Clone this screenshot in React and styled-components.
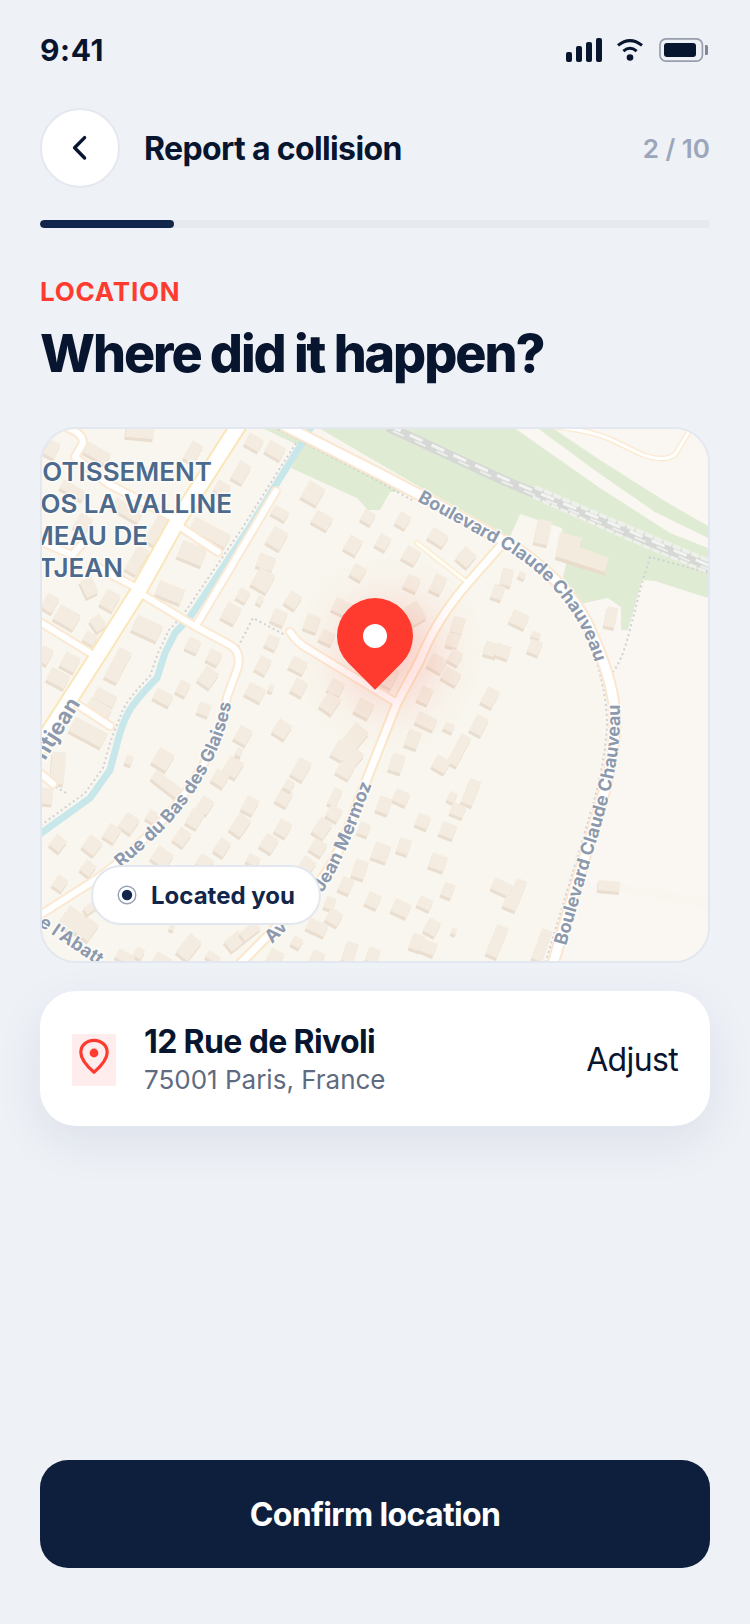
import styled, { createGlobalStyle } from "styled-components";

// x, y of the centre, width, height, rotation
const buildings = [
  [140, 430, 28, 16, 5], [50, 448, 16, 16, 25], [97, 453, 26, 12, 30], [193, 452, 12, 20, 30],
  [254, 442, 16, 13, 30], [275, 450, 18, 13, 30], [241, 472, 13, 20, 30], [222, 488, 14, 12, 30],
  [313, 493, 18, 19, 30], [322, 520, 18, 14, 30], [368, 517, 12, 12, 30], [280, 513, 16, 10, 30],
  [277, 538, 16, 19, 30], [353, 545, 14, 16, 30], [266, 562, 17, 14, 20], [263, 580, 18, 20, 30],
  [358, 572, 13, 13, 30], [210, 532, 40, 14, 28], [192, 553, 26, 18, 22], [83, 523, 14, 16, 30],
  [157, 530, 13, 30, 30], [137, 560, 13, 28, 30], [127, 510, 30, 12, 30], [73, 490, 26, 10, 30],
  [170, 592, 27, 15, 22], [89, 587, 13, 18, -25], [110, 600, 15, 18, 30], [50, 603, 13, 16, 30],
  [67, 617, 23, 17, 30], [98, 623, 12, 14, -35], [90, 638, 12, 11, 30], [147, 628, 28, 17, 25],
  [243, 595, 11, 12, 30], [260, 600, 6, 8, 30], [293, 600, 13, 15, 35], [231, 613, 15, 18, 28],
  [279, 617, 14, 14, 25], [312, 623, 14, 16, 20], [342, 607, 18, 14, 25], [327, 637, 14, 12, 25],
  [272, 642, 12, 13, 25], [193, 645, 13, 13, 25], [214, 657, 13, 13, 28], [118, 665, 14, 34, 28],
  [45, 655, 12, 16, 28], [70, 662, 16, 16, 28], [58, 678, 20, 14, 28], [263, 665, 12, 16, 28],
  [298, 665, 16, 13, 28], [208, 677, 15, 18, 35], [105, 697, 22, 12, 28], [183, 688, 11, 14, 28],
  [255, 692, 18, 14, 28], [271, 688, 5, 7, 20], [299, 687, 13, 15, 28], [336, 687, 14, 14, 28],
  [163, 697, 18, 12, 28], [403, 520, 12, 14, 30], [438, 537, 18, 13, 32], [383, 542, 12, 14, 30],
  [411, 555, 15, 15, 30], [466, 557, 15, 16, 40], [412, 583, 14, 14, 25], [438, 584, 12, 18, 25],
  [507, 577, 11, 17, 12], [498, 592, 11, 14, 20], [522, 575, 7, 6, 25], [543, 532, 14, 24, 12],
  [611, 617, 11, 20, 12], [415, 613, 16, 20, -30], [519, 619, 17, 14, 25], [458, 625, 12, 16, 15],
  [453, 640, 12, 14, 15], [536, 635, 9, 6, 20], [535, 647, 12, 14, 22], [491, 649, 13, 14, 15],
  [503, 651, 14, 13, 20], [455, 657, 12, 13, 30], [437, 663, 16, 15, 30], [451, 676, 17, 13, 30],
  [425, 695, 12, 16, 25], [490, 697, 13, 18, 28], [390, 677, 12, 20, 28], [204, 709, 12, 12, 20],
  [330, 703, 15, 18, 35], [364, 708, 16, 16, 28], [282, 729, 15, 16, 32], [243, 735, 14, 16, 30],
  [355, 737, 17, 24, 40], [163, 759, 17, 18, 32], [168, 785, 36, 11, 38], [342, 751, 17, 18, 30],
  [353, 757, 15, 18, 40], [345, 770, 15, 14, 30], [233, 767, 16, 18, 32], [220, 778, 14, 14, 32],
  [239, 752, 6, 8, 20], [301, 769, 14, 20, 30], [129, 760, 7, 9, 20], [98, 710, 24, 16, 30],
  [88, 732, 36, 16, 28], [58, 768, 14, 32, 5], [47, 796, 12, 16, 5], [284, 797, 13, 16, 30],
  [289, 785, 9, 10, 30], [250, 805, 13, 16, 28], [205, 805, 13, 15, 32], [195, 818, 13, 18, 30],
  [335, 797, 9, 18, 25], [334, 813, 13, 13, 30], [322, 828, 14, 18, 35], [240, 825, 14, 20, 35],
  [283, 828, 13, 15, 30], [364, 829, 11, 12, 20], [152, 816, 10, 11, 30], [129, 823, 15, 17, 35],
  [112, 833, 13, 16, 32], [58, 843, 13, 14, 38], [92, 845, 15, 16, 38], [182, 837, 13, 16, 35],
  [222, 847, 12, 16, 32], [269, 843, 14, 16, 32], [318, 847, 14, 14, 32], [162, 857, 18, 16, 35],
  [205, 862, 15, 12, 32], [253, 860, 12, 10, 30], [307, 865, 14, 14, 35], [88, 868, 12, 13, 38],
  [60, 883, 12, 13, 35], [360, 869, 13, 18, 18], [346, 885, 12, 15, 25], [373, 900, 13, 14, 25],
  [330, 903, 10, 12, 20], [334, 917, 14, 14, 30], [72, 920, 20, 22, 35], [86, 928, 18, 20, 35],
  [90, 908, 12, 8, -35], [235, 941, 18, 13, -38], [250, 931, 20, 10, -38], [189, 947, 15, 24, 38],
  [317, 927, 20, 12, 25], [297, 942, 10, 10, 30], [275, 957, 14, 14, 28], [317, 958, 13, 14, 25],
  [350, 952, 12, 20, 18], [139, 953, 9, 10, 30], [125, 957, 18, 10, 30], [163, 960, 18, 10, 30],
  [213, 957, 14, 8, 35], [172, 927, 5, 6, 20], [426, 721, 20, 12, 25], [449, 727, 10, 8, 25],
  [479, 725, 13, 18, 28], [413, 739, 13, 17, 20], [459, 750, 11, 32, 28], [441, 764, 15, 14, 30],
  [397, 763, 13, 18, 18], [471, 792, 12, 26, 22], [452, 797, 8, 10, 25], [458, 810, 14, 12, 22],
  [401, 797, 15, 13, 25], [384, 805, 13, 16, 20], [423, 821, 13, 13, 22], [448, 830, 15, 14, 22],
  [381, 852, 16, 17, 20], [404, 846, 12, 15, 20], [438, 862, 16, 15, 20], [448, 890, 11, 14, 22],
  [502, 887, 20, 12, 25], [518, 890, 11, 22, 22], [511, 903, 14, 12, 22], [401, 908, 17, 14, 25],
  [425, 903, 14, 11, 25], [432, 927, 13, 15, 28], [454, 931, 5, 6, 20], [417, 942, 12, 16, 20],
  [428, 947, 16, 13, 22], [497, 941, 12, 32, 22], [542, 945, 11, 32, 20], [609, 886, 22, 10, 5],
  [373, 955, 12, 14, 20],
];

const boulevard =
  "M285 426 L380 474 L420 495 L500 539 C545 563 575 598 588 625 C602 655 615 690 615 720 C615 765 598 815 583 863 L553 964";
const mermoz =
  "M503 543 L468 583 C440 615 428 640 420 660 L397 703 L365 784 C350 822 340 855 323 877 C308 897 275 928 240 964";
const glaises =
  "M138 592 L193 625 L230 645 Q241 651 238 667 L227 697 C222 735 200 780 163 820 C140 845 110 870 95 880 L40 915";

const smallRoads = [
  "M276 491 L197 624",
  "M182 528 L218 552",
  "M66 427 Q84 434 83 443 L75 457",
  "M75 457 L107 483 L175 519",
  "M40 541 L72 555 L83 543",
  "M137 588 L97 567",
  "M40 622 L95 656",
  "M78 705 L110 726",
  "M40 773 L53 784",
  "M290 632 Q298 644 310 650 L397 703",
];

const canal =
  "M311 427 L302 443 L277 483 L250 527 L190 617 L175 633 L165 653 L157 678 Q135 700 128 713 Q122 725 118 740 L110 770 L90 798 L40 834";

const footpaths = [
  "M296 443 L270 484 L243 527 L183 615 L169 630 L158 653 L150 676 Q128 698 122 712 L111 740 L103 768 L85 793 L40 826",
  "M238 647 L253 618 L285 635",
  "M708 573 L650 557 L642 583 L628 637 Q622 660 613 672",
  "M278 429 L376 480 L412 500",
  "M596 660 Q607 695 607 725 Q605 765 590 815 L546 961",
  "M66 793 L56 787",
];

function MapDrawing() {
  return (
    <MapSvg viewBox="42 429 666 532" preserveAspectRatio="xMidYMid slice" aria-hidden="true">
      <defs>
        <path id="label-boulevard-north" d="M417 501 L499 546 C541 569 568 602 581 628 C590 646 596 662 602 690" />
        <path id="label-boulevard-east" d="M566 946 L589 865 C604 817 620 765 620 720 L619 670" />
        <path id="label-avenue" d="M272 944 L300 916" />
        <path id="label-mermoz" d="M322 893 C342 866 356 824 371 786 L386 745" />
        <path id="label-glaises" d="M121 868 C139 853 155 838 168 825 C205 785 226 738 232 699 L234 670" />
        <path id="label-petitjean" d="M45 761 L92 685" />
        <path id="label-abattoir" d="M38 925 L112 975" />
      </defs>

      <rect x="42" y="429" width="666" height="532" fill="#f8f6ee" />
      <path
        d="M500 429 H708 V961 H553 L583 863 C598 815 615 765 615 720 C615 690 602 655 588 625 L565 577 Z"
        fill="#faf7f2"
      />
      <path d="M611 882 L708 898 V909 L611 890 Z" fill="#f8f6ee" />

      <g fill="#dfebd3">
        <path d="M260 427 L297 427 L412 492 L390 492 L380 510 L368 510 L357 498 L291 468 L302 447 Z" />
        <path d="M317 427 H513 L600 488 L670 533 L708 548 V598 L655 581 L642 580 L628 630 H621 V607 L608 598 L580 604 L563 577 L567 560 L562 528 L520 514 L510 537 L420 487 Z" />
        <path d="M536 427 H551 L600 460 L663 500 L708 526 V538 L655 512 L600 474 Z" />
      </g>

      <path d={canal} fill="none" stroke="#c8e7ea" strokeWidth="7" />

      <g fill="none" stroke="#cfd1d6" strokeWidth="2" strokeDasharray="2 3">
        {footpaths.map((d) => (
          <path key={d} d={d} />
        ))}
      </g>

      <path d="M388 427 L503 480 L653 543 L710 568" fill="none" stroke="#d6d8d5" strokeWidth="10" />
      <path d="M388 425 L503 478 L653 541 L710 566" fill="none" stroke="#f3f4f2" strokeWidth="3" strokeDasharray="14 10" />
      <path d="M393 431 L503 482 L653 545 L710 570" fill="none" stroke="#eeefed" strokeWidth="2" strokeDasharray="12 12" />
      <path d="M535 487 L655 538 L710 561" fill="none" stroke="#eff0ec" strokeWidth="4" strokeDasharray="8 2" />
      <path d="M533 497 L651 549 L710 573" fill="none" stroke="#eff0ec" strokeWidth="3" strokeDasharray="8 2" />

      {buildings.map(([x, y, w, h, r]) => (
        <g key={`${x}-${y}`}>
          <rect
            x={x - w / 2}
            y={y - h / 2}
            width={w}
            height={h}
            fill="#e9decf"
            transform={`translate(-1 3) rotate(${r} ${x} ${y})`}
          />
          <rect x={x - w / 2} y={y - h / 2} width={w} height={h} fill="#f4ece0" transform={`rotate(${r} ${x} ${y})`} />
        </g>
      ))}
      <path d="M560 535 L582 541 L580 550 L608 561 L605 576 L555 560 Z" fill="#e9dccd" />
      <path d="M560 532 L582 538 L580 547 L609 558 L605 572 L555 556 Z" fill="#f4ebdf" />

      <g fill="none" strokeLinecap="round" strokeLinejoin="round">
        <g stroke="#fbe9d3" strokeWidth="10">
          {smallRoads.map((d) => (
            <path key={d} d={d} />
          ))}
          <path d={glaises} />
        </g>
        <path d="M417 543 L468 583" stroke="#fbeccf" strokeWidth="6" />
        <path d="M555 427 Q590 430 612 440 L643 455 Q668 463 676 453 L690 430" stroke="#fcebd4" strokeWidth="6" />
        <path d={mermoz} stroke="#fbe7c8" strokeWidth="11" />
        <path d={boulevard} stroke="#fbe7cf" strokeWidth="13" />
        <path d="M242 420 L178 520 L138 592 L97 657 L36 752" stroke="#fbe6b8" strokeWidth="18" />

        <g stroke="#ffffff" strokeWidth="6">
          {smallRoads.map((d) => (
            <path key={d} d={d} />
          ))}
          <path d={glaises} />
        </g>
        <path d="M417 543 L468 583" stroke="#fffdf6" strokeWidth="3" />
        <path d="M555 427 Q590 430 612 440 L643 455 Q668 463 676 453 L690 430" stroke="#ffffff" strokeWidth="3" />
        <path d={mermoz} stroke="#ffffff" strokeWidth="7" />
        <path d={boulevard} stroke="#ffffff" strokeWidth="9" />
        <path d="M242 420 L178 520 L138 592 L97 657 L36 752" stroke="#ffffff" strokeWidth="14" />
      </g>

      <DistrictLabel textAnchor="end">
        <tspan x="212" y="481">OTISSEMENT</tspan>
        <tspan x="232" y="513">OS LA VALLINE</tspan>
        <tspan x="148" y="545">MEAU DE</tspan>
        <tspan x="123" y="577">TJEAN</tspan>
      </DistrictLabel>

      <StreetLabel>
        <textPath href="#label-boulevard-north">Boulevard Claude Chauveau</textPath>
      </StreetLabel>
      <StreetLabel>
        <textPath href="#label-boulevard-east">Boulevard Claude Chauveau</textPath>
      </StreetLabel>
      <StreetLabel>
        <textPath href="#label-avenue">Av</textPath>
      </StreetLabel>
      <StreetLabel>
        <textPath href="#label-mermoz">Jean Mermoz</textPath>
      </StreetLabel>
      <StreetLabel>
        <textPath href="#label-glaises">Rue du Bas des Glaises</textPath>
      </StreetLabel>
      <StreetLabel $large>
        <textPath href="#label-petitjean">ntjean</textPath>
      </StreetLabel>
      <StreetLabel>
        <textPath href="#label-abattoir">e l'Abatt</textPath>
      </StreetLabel>
    </MapSvg>
  );
}

function StatusIcons() {
  return (
    <svg width="144" height="26" viewBox="0 0 144 26" fill="#08152f" aria-hidden="true">
      <rect x="0" y="15" width="6" height="10" rx="2" />
      <rect x="10" y="9" width="6" height="16" rx="2" />
      <rect x="20" y="5" width="6" height="20" rx="2" />
      <rect x="30" y="1" width="6" height="24" rx="2" />
      <g fill="none" stroke="#08152f" strokeWidth="3">
        <path d="M52 8.4 Q64 -1.2 76 8.4" />
        <path d="M57.4 14.2 Q64 8.4 70.6 14.2" />
      </g>
      <circle cx="64" cy="20.5" r="3.3" />
      <rect x="94" y="1.8" width="42.4" height="22.4" rx="6" fill="none" stroke="#989eac" strokeWidth="1.7" />
      <rect x="98" y="6" width="32" height="14" rx="3" />
      <path d="M139 8 h1.5 a1.5 1.5 0 0 1 1.5 1.5 v7 a1.5 1.5 0 0 1 -1.5 1.5 h-1.5 Z" fill="#7f8798" />
    </svg>
  );
}

export default function App() {
  return (
    <>
      <GlobalStyle />
      <Screen>
        <StatusBar>
          <Time>9:41</Time>
          <StatusIcons />
        </StatusBar>

        <Header>
          <BackButton type="button" aria-label="Back">
            <svg width="20" height="28" viewBox="0 0 20 28" fill="none" aria-hidden="true">
              <path
                d="M14.6 3.6 L4.6 13.8 L14.6 24"
                stroke="#08152f"
                strokeWidth="3.4"
                strokeLinecap="round"
                strokeLinejoin="round"
              />
            </svg>
          </BackButton>
          <HeaderTitle>Report a collision</HeaderTitle>
          <StepCount>2 / 10</StepCount>
        </Header>

        <Progress role="progressbar" aria-valuenow={2} aria-valuemin={0} aria-valuemax={10} aria-label="Steps">
          <ProgressFill style={{ width: `${(2 / 10) * 100}%` }} />
        </Progress>

        <Eyebrow>LOCATION</Eyebrow>
        <Question>Where did it happen?</Question>

        <MapCard>
          <MapDrawing />
          <Pin>
            <PinHole />
          </Pin>
          <LocatedBadge>
            <svg width="20" height="20" viewBox="0 0 20 20" aria-hidden="true">
              <circle cx="10" cy="10" r="8.8" fill="#ffffff" stroke="#96a0b6" strokeWidth="1.4" />
              <circle cx="10" cy="10" r="5.2" fill="#12264c" />
            </svg>
            Located you
          </LocatedBadge>
        </MapCard>

        <AddressCard>
          <AddressIcon>
            <svg width="32" height="38" viewBox="0 0 32 38" fill="none" aria-hidden="true">
              <path
                d="M16 34.2 C9.5 28.5 2.8 21.5 2.8 14.4 C2.8 7.4 8.7 2.4 16 2.4 C23.3 2.4 29.2 7.4 29.2 14.4 C29.2 21.5 22.5 28.5 16 34.2 Z"
                stroke="#ff3b30"
                strokeWidth="3.2"
                strokeLinejoin="round"
              />
              <circle cx="16" cy="15" r="4.4" fill="#ff3b30" />
            </svg>
          </AddressIcon>
          <AddressText>
            <Street>12 Rue de Rivoli</Street>
            <City>75001 Paris, France</City>
          </AddressText>
          <AdjustButton type="button">Adjust</AdjustButton>
        </AddressCard>

        <ConfirmButton type="button">Confirm location</ConfirmButton>
      </Screen>
    </>
  );
}

const GlobalStyle = createGlobalStyle`
  * {
    box-sizing: border-box;
  }

  body {
    margin: 0;
    background: #eef1f6;
    color: #08152f;
    font-family: Inter, "Liberation Sans", sans-serif;
  }

  button {
    font-family: inherit;
    cursor: pointer;
  }
`;

const Screen = styled.main`
  display: flex;
  flex-direction: column;
  min-height: 100vh;
  padding: 30px 40px 56px;
`;

const StatusBar = styled.div`
  display: flex;
  align-items: center;
  justify-content: space-between;
  height: 40px;
`;

const Time = styled.span`
  font-size: 30px;
  font-weight: 700;
  line-height: 40px;
  letter-spacing: 0.02em;
`;

const Header = styled.header`
  display: flex;
  align-items: center;
  gap: 24px;
  margin-top: 38px;
`;

const BackButton = styled.button`
  display: flex;
  align-items: center;
  justify-content: center;
  width: 80px;
  height: 80px;
  padding: 0;
  border: 2px solid #e5e8ef;
  border-radius: 50%;
  background: #ffffff;
`;

const HeaderTitle = styled.h1`
  flex: 1;
  margin: 0;
  padding-top: 2px;
  font-size: 32px;
  font-weight: 700;
  line-height: 40px;
  letter-spacing: -0.02em;
`;

const StepCount = styled.span`
  padding-top: 2px;
  color: #9ba6bb;
  font-size: 26px;
  font-weight: 600;
  line-height: 40px;
`;

const Progress = styled.div`
  height: 8px;
  margin-top: 32px;
  border-radius: 4px;
  background: #e6e9ee;
  overflow: hidden;
`;

const ProgressFill = styled.div`
  height: 100%;
  border-radius: 4px;
  background: #12264c;
`;

const Eyebrow = styled.p`
  margin: 48px 0 0;
  color: #ff3b30;
  font-size: 26px;
  font-weight: 700;
  line-height: 32px;
  letter-spacing: 0.03em;
`;

const Question = styled.h2`
  margin: 16px 0 0;
  font-size: 52px;
  font-weight: 800;
  line-height: 60px;
  letter-spacing: -0.04em;
`;

const MapCard = styled.section`
  position: relative;
  margin-top: 43px;
  border: 2px solid #e3e7ef;
  border-radius: 36px;
  overflow: hidden;
`;

const MapSvg = styled.svg`
  display: block;
  width: 100%;
  height: auto;
`;

const DistrictLabel = styled.text`
  fill: #4d6a8c;
  stroke: #ffffff;
  stroke-width: 3px;
  stroke-opacity: 0.7;
  paint-order: stroke;
  font-size: 26px;
  font-weight: 600;
`;

const StreetLabel = styled.text`
  fill: #8d99ac;
  stroke: #ffffff;
  stroke-width: 3px;
  stroke-opacity: 0.7;
  paint-order: stroke;
  font-size: ${({ $large }) => ($large ? "22px" : "18px")};
  font-weight: 700;
`;

const Pin = styled.div`
  position: absolute;
  top: 169px;
  left: 50%;
  display: flex;
  align-items: center;
  justify-content: center;
  width: 76px;
  height: 76px;
  margin-left: -38px;
  border-radius: 50% 50% 50% 0;
  background: #ff3b30;
  box-shadow: 0 20px 56px rgba(255, 59, 48, 0.3);
  transform: rotate(-45deg);
`;

const PinHole = styled.div`
  width: 24px;
  height: 24px;
  border-radius: 50%;
  background: #ffffff;
`;

const LocatedBadge = styled.div`
  position: absolute;
  bottom: 36px;
  left: 49px;
  display: flex;
  align-items: center;
  gap: 14px;
  height: 60px;
  padding: 0 24px;
  border: 2px solid #e3e7ef;
  border-radius: 30px;
  background: #ffffff;
  color: #12264c;
  font-size: 24px;
  font-weight: 700;
`;

const AddressCard = styled.section`
  display: flex;
  align-items: center;
  gap: 28px;
  margin-top: 28px;
  padding: 31px 32px 28px;
  border-radius: 36px;
  background: #ffffff;
  box-shadow: 0 16px 48px rgba(20, 38, 90, 0.08);
`;

const AddressIcon = styled.span`
  display: flex;
  justify-content: center;
  width: 44px;
  height: 52px;
  padding-top: 4px;
  background: #ffeded;
`;

const AddressText = styled.div`
  flex: 1;
`;

const Street = styled.p`
  margin: 0;
  font-size: 32px;
  font-weight: 700;
  line-height: 40px;
  letter-spacing: -0.02em;
`;

const City = styled.p`
  margin: 0;
  color: #5f6b80;
  font-size: 26px;
  line-height: 36px;
`;

const AdjustButton = styled.button`
  padding: 0;
  border: 0;
  background: none;
  color: #08152f;
  font-size: 32px;
  line-height: 40px;
  letter-spacing: -0.02em;
`;

const ConfirmButton = styled.button`
  height: 108px;
  margin-top: auto;
  border: 0;
  border-radius: 28px;
  background: #0e1f3d;
  color: #ffffff;
  font-size: 32px;
  font-weight: 700;
  letter-spacing: -0.02em;
`;
